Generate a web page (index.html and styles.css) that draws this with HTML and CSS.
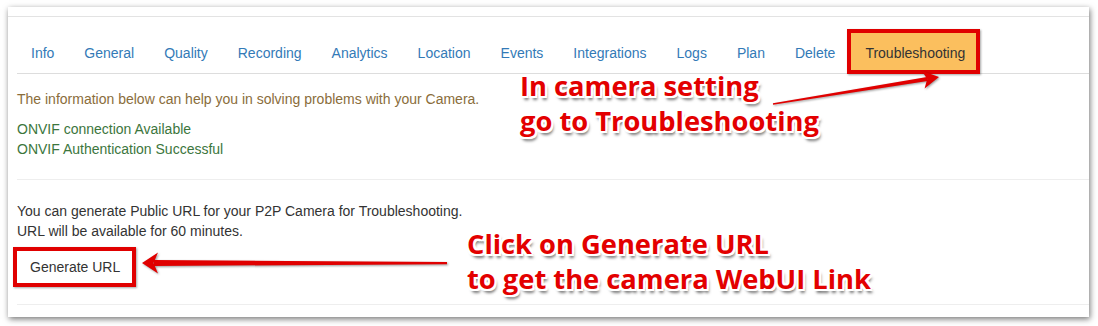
FILE: index.html
```html
<!DOCTYPE html>
<html>
<head>
<meta charset="utf-8">
<link rel="stylesheet" href="styles.css">
</head>
<body>
<div class="page">
  <div class="card">
    <div class="panel">
      <ul class="tabs">
        <li><a class="tab">Info</a></li>
        <li><a class="tab">General</a></li>
        <li><a class="tab">Quality</a></li>
        <li><a class="tab">Recording</a></li>
        <li><a class="tab">Analytics</a></li>
        <li><a class="tab">Location</a></li>
        <li><a class="tab">Events</a></li>
        <li><a class="tab">Integrations</a></li>
        <li><a class="tab">Logs</a></li>
        <li><a class="tab">Plan</a></li>
        <li><a class="tab">Delete</a></li>
        <li><a class="tab active">Troubleshooting</a></li>
      </ul>
      <div class="content">
        <p class="warn">The information below can help you in solving problems with your Camera.</p>
        <div class="ok">ONVIF connection Available</div>
        <div class="ok">ONVIF Authentication Successful</div>
        <div class="divider first"></div>
        <p class="plain">You can generate Public URL for your P2P Camera for Troubleshooting.<br>URL will be available for 60 minutes.</p>
        <button class="btn">Generate URL</button>
        <div class="divider last"></div>
      </div>
    </div>
  </div>

  <svg class="arrows" width="1098" height="326" viewBox="0 0 1098 326">
    <polygon fill="#e00000" points="772.9,103.3 773.1,104.7 927.5,80.9 926.9,76.9"/>
    <polygon fill="#e00000" points="939,77 921.8,70.7 927.2,78.9 924.6,88.5"/>
    <polygon fill="#e00000" points="447,262 447,264.2 154,266 154,260"/>
    <polygon fill="#e00000" points="142,263 158,252.5 153.5,263 158,273.5"/>
  </svg>

  <div class="note note-top">In camera setting<br>go to Troubleshooting</div>
  <div class="note note-bottom">Click on Generate URL<br>to get the camera WebUI Link</div>
</div>
</body>
</html>
```

FILE: styles.css
```css
* { box-sizing: border-box; }
html, body { margin: 0; padding: 0; background: #fff; }
body {
  font-family: "Liberation Sans", Arial, sans-serif;
  font-size: 14px;
  line-height: 20px;
  color: #333;
}
.page {
  position: relative;
  width: 1098px;
  height: 326px;
  overflow: hidden;
  padding-top: 7px;
  padding-left: 8px;
}
.card {
  width: 1081px;
  background: #fff;
  padding-top: 9px;
  padding-bottom: 12px;
  box-shadow: 1px 2px 6px rgba(0, 0, 0, 0.55);
}
.panel {
  border-top: 1px solid #e3e3e3;
}
.tabs {
  list-style: none;
  margin: 16px 0 0 9px;
  padding: 0;
  display: flex;
  align-items: flex-start;
  height: 41px;
  border-bottom: 1px solid #dddddd;
}
.tabs li { display: block; }
.tab {
  display: block;
  padding: 10px 14px;
  margin-right: 2px;
  color: #337ab7;
  text-decoration: none;
  white-space: nowrap;
}
.tab.active {
  color: #333;
  background: #fbbf5e;
  border: 4px solid #e00000;
  margin-top: -4px;
  margin-left: -4px;
  padding: 10px 11px 7px 14px;
  position: relative;
  box-shadow: 1px 1px 2px rgba(0,0,0,0.35);
}
.content {
  margin-left: 9px;
}
.warn {
  margin: 15px 0 10px;
  color: #8a6d3b;
}
.ok { color: #3c763d; }
.divider {
  border-top: 1px solid #eeeeee;
}
.divider.first { margin-top: 20px; }
.divider.last { margin-top: 17px; }
.plain {
  margin: 21px 0 6px;
  color: #333;
}
.btn {
  display: block;
  margin-left: -4px;
  font-family: "Liberation Sans", Arial, sans-serif;
  font-size: 14px;
  line-height: 20px;
  color: #333;
  background: #fff;
  border: 4px solid #e00000;
  padding: 6px 12px 6px 13px;
  box-shadow: 1px 1px 2px rgba(0,0,0,0.35);
}
.arrows {
  position: absolute;
  left: 0;
  top: 0;
  filter: drop-shadow(1px 1px 1px rgba(0,0,0,0.4));
}
.note {
  position: absolute;
  font-family: "Open Sans", sans-serif;
  font-weight: 700;
  font-size: 27.3px;
  line-height: 35px;
  color: #e30000;
  white-space: nowrap;
  text-shadow:
    -2px -2px 0 #fff, 2px -2px 0 #fff, -2px 2px 0 #fff, 2px 2px 0 #fff,
    0 -2px 0 #fff, 0 2px 0 #fff, -2px 0 0 #fff, 2px 0 0 #fff,
    2px 4px 3px rgba(0,0,0,0.55);
}
.note-top { left: 520px; top: 68px; }
.note-bottom { left: 467px; top: 226px; }
```
